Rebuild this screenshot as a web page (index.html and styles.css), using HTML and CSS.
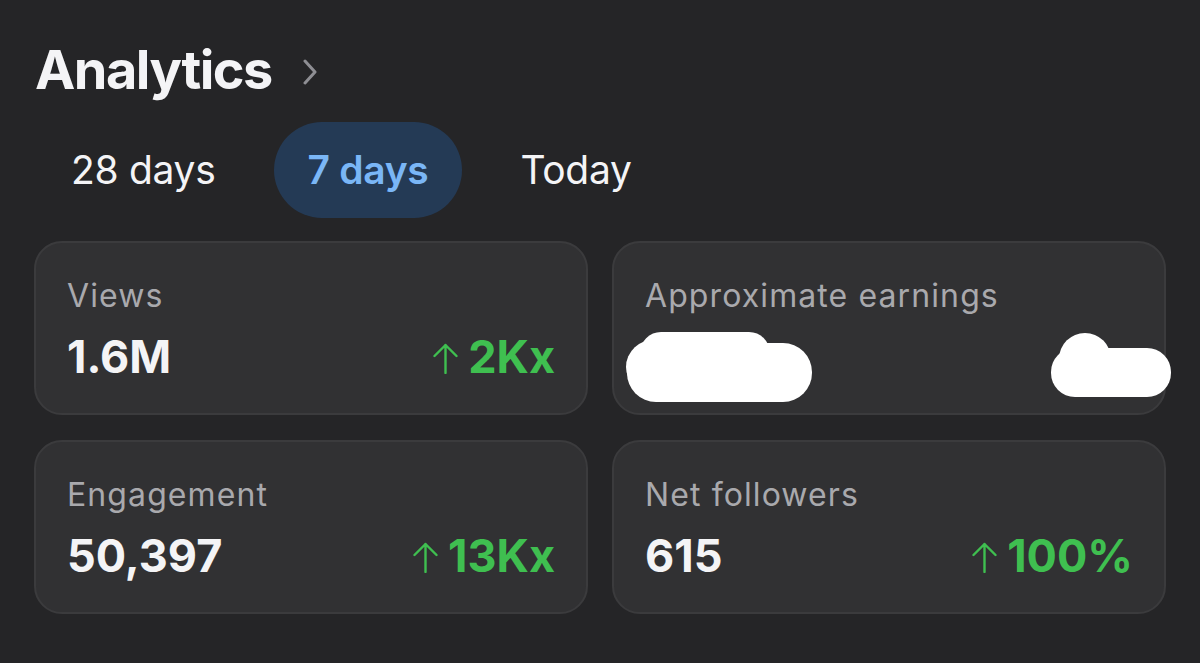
FILE: index.html
```html
<!DOCTYPE html>
<html lang="en">
<head>
    <meta charset="UTF-8">
    <meta name="viewport" content="width=device-width, initial-scale=1.0">
    <title>Analytics</title>
    <link rel="stylesheet" href="styles.css">
</head>
<body>
    <div class="page">
        <h1 class="title">
            <span>Analytics</span>
            <svg class="chevron" width="16" height="26" viewBox="0 0 16 26">
                <path d="M3 2 L13 13 L3 24" fill="none" stroke="#8e8e93" stroke-width="3" stroke-linecap="round" stroke-linejoin="round"/>
            </svg>
        </h1>

        <div class="tabs">
            <div class="tab">28 days</div>
            <div class="tab active">7 days</div>
            <div class="tab">Today</div>
        </div>

        <div class="cards">
            <div class="card">
                <div class="label">Views</div>
                <div class="row">
                    <span class="value">1.6M</span>
                    <span class="change">
                        <svg class="arrow" width="27" height="32" viewBox="0 0 27 32"><path d="M13.5 31 V3 M2.5 14 L13.5 3 L24.5 14" fill="none" stroke="#3fbf50" stroke-width="2.4" stroke-linecap="round" stroke-linejoin="round"/></svg>2Kx
                    </span>
                </div>
            </div>

            <div class="card hidden-values">
                <div class="label">Approximate earnings</div>
                <div class="row"></div>
                <!-- scribbled-over values -->
                <svg class="redact" width="560" height="174" viewBox="0 0 560 174">
                    <g fill="#ffffff">
                        <rect x="13" y="100" width="185" height="59" rx="29"/>
                        <rect x="26" y="89" width="130" height="42" rx="21"/>
                        <ellipse cx="42" cy="124" rx="30" ry="28"/>
                        <rect x="437" y="105" width="120" height="49" rx="24"/>
                        <circle cx="471" cy="116" r="26"/>
                    </g>
                </svg>
            </div>

            <div class="card">
                <div class="label">Engagement</div>
                <div class="row">
                    <span class="value">50,397</span>
                    <span class="change">
                        <svg class="arrow" width="27" height="32" viewBox="0 0 27 32"><path d="M13.5 31 V3 M2.5 14 L13.5 3 L24.5 14" fill="none" stroke="#3fbf50" stroke-width="2.4" stroke-linecap="round" stroke-linejoin="round"/></svg>13Kx
                    </span>
                </div>
            </div>

            <div class="card">
                <div class="label">Net followers</div>
                <div class="row">
                    <span class="value">615</span>
                    <span class="change">
                        <svg class="arrow" width="27" height="32" viewBox="0 0 27 32"><path d="M13.5 31 V3 M2.5 14 L13.5 3 L24.5 14" fill="none" stroke="#3fbf50" stroke-width="2.4" stroke-linecap="round" stroke-linejoin="round"/></svg>100%
                    </span>
                </div>
            </div>
        </div>
    </div>
</body>
</html>
```

FILE: styles.css
```css
body {
    margin: 0;
    background-color: #252527;
    font-family: 'Inter', 'Roboto', 'Liberation Sans', sans-serif;
    color: #f4f4f6;
}
.page {
    padding: 38px 34px 0 34px;
}
.title {
    display: flex;
    align-items: center;
    gap: 30px;
    margin: 0 0 20px 1px;
    font-size: 54px;
    line-height: 64px;
    font-weight: 700;
    letter-spacing: -1.5px;
}
.chevron {
    margin-top: 4px;
}
.tabs {
    display: flex;
    gap: 24px;
    margin-left: 3px;
}
.tab {
    height: 96px;
    line-height: 96px;
    padding: 0 34px;
    border-radius: 48px;
    font-size: 39px;
    letter-spacing: -0.3px;
    color: #f4f4f6;
}
.tab.active {
    background-color: #243a55;
    color: #7ab6f6;
    font-weight: 600;
}
.cards {
    display: grid;
    grid-template-columns: 1fr 1fr;
    column-gap: 24px;
    row-gap: 25px;
    margin-top: 23px;
}
.card {
    position: relative;
    background-color: #313133;
    border: 2px solid #3b3b3d;
    border-radius: 28px;
    padding: 35px 31px 31px 31px;
}
.label {
    font-size: 32px;
    line-height: 36px;
    letter-spacing: 1.1px;
    color: #a9a9ad;
}
.row {
    display: flex;
    justify-content: space-between;
    align-items: center;
    height: 50px;
    margin-top: 18px;
}
.value {
    font-size: 45px;
    line-height: 50px;
    font-weight: 700;
}
.change {
    display: flex;
    align-items: center;
    font-size: 45px;
    line-height: 50px;
    font-weight: 700;
    color: #3fbf50;
}
.arrow {
    margin-right: 9px;
    margin-top: 2px;
}
.redact {
    position: absolute;
    left: 0;
    top: 0;
    overflow: visible;
}
```
